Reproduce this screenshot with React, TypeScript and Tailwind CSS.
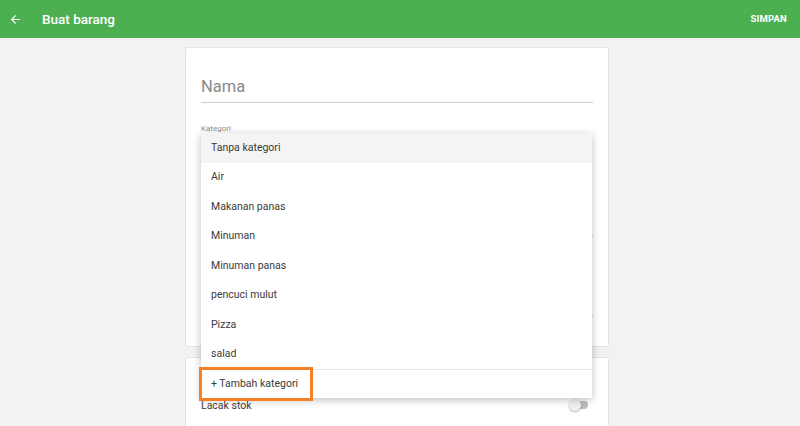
import { ArrowLeft } from 'lucide-react';

const categories = [
  'Tanpa kategori',
  'Air',
  'Makanan panas',
  'Minuman',
  'Minuman panas',
  'pencuci mulut',
  'Pizza',
  'salad',
];

export default function App() {
  return (
    <div
      className="flex h-[426px] w-full flex-col overflow-hidden bg-[#f2f2f2]"
      style={{ fontFamily: 'Roboto, "Noto Sans", sans-serif' }}
    >
      {/* App bar */}
      <header className="flex h-[38px] shrink-0 items-center bg-[#4caf50] pl-[9px] pr-[13px] text-white">
        <ArrowLeft className="h-[13px] w-[13px]" strokeWidth={2} />
        <h1 className="ml-[20px] text-[13.5px] font-medium">Buat barang</h1>
        <button type="button" className="ml-auto text-[9.5px] font-bold tracking-[0.02em]">
          SIMPAN
        </button>
      </header>

      <div className="ml-[185px] flex w-[424px] flex-col gap-[10px] pt-[9px]">
        {/* Item card */}
        <section className="relative h-[300px] rounded-[2px] border border-[#e4e4e4] bg-white px-[15px]">
          <div className="mt-[27px] border-b border-[#cfcfcf] pb-[2px] text-[16.5px] text-[#8a8a8a]">
            Nama
          </div>
          <div className="mt-[20px] text-[8px] text-[#8f8f8f]">Kategori</div>
          <div className="mt-[100px] flex justify-end">
            <span className="h-[3px] w-[3px] rounded-full bg-[#d6d6d6]" />
          </div>
          <div className="mt-[76px] flex justify-end">
            <span className="h-[3px] w-[3px] rounded-full bg-[#d6d6d6]" />
          </div>

          {/* Category dropdown */}
          <div className="absolute left-[15px] top-[85px] z-10 w-[391px] bg-white shadow-[0_2px_8px_rgba(0,0,0,0.25)]">
            {categories.map((c, i) => (
              <div
                key={c}
                className={`flex h-[29.5px] items-center pl-[10px] text-[10.5px] text-[#3a3a3a] ${
                  i === 0 ? 'bg-[#f4f4f4]' : ''
                }`}
              >
                {c}
              </div>
            ))}
            <div className="flex h-[29px] items-center border-t border-[#e6e6e6] pl-[10px] text-[10.5px] text-[#3a3a3a]">
              + Tambah kategori
            </div>
            <div className="pointer-events-none absolute bottom-[-3px] left-[-2px] h-[34px] w-[114px] border-[3px] border-[#f47f24]" />
          </div>
        </section>

        {/* Stock card */}
        <section className="flex h-[80px] items-start rounded-[2px] border border-[#e4e4e4] bg-white px-[15px] pt-[40px]">
          <span className="text-[10.5px] text-[#3a3a3a]">Lacak stok</span>
          <div className="relative ml-auto mr-[5px] mt-[3px] h-[8px] w-[16px] rounded-full bg-[#bdbdbd]">
            <span className="absolute left-[-3px] top-[-2px] h-[12px] w-[12px] rounded-full bg-[#f1f1f1] shadow-[0_1px_2px_rgba(0,0,0,0.3)]" />
          </div>
        </section>
      </div>
    </div>
  );
}
